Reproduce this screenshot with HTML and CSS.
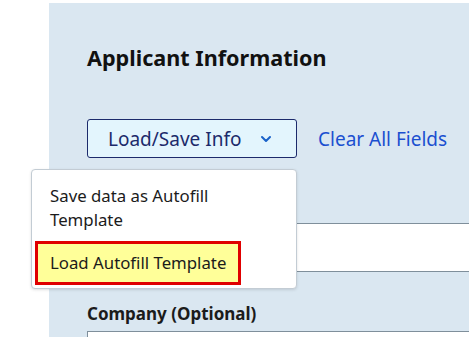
FILE: index.html
```html
<!DOCTYPE html>
<html lang="en">
<head>
    <meta charset="UTF-8">
    <meta name="viewport" content="width=device-width, initial-scale=1.0">
    <title>Applicant Information</title>
    <link rel="stylesheet" href="styles.css">
</head>
<body>
    <main class="page">
        <section class="panel">
            <h2 class="panel-title">Applicant Information</h2>

            <div class="actions">
                <div class="dropdown">
                    <button class="dropdown-toggle">
                        <span>Load/Save Info</span>
                        <svg class="chevron" width="12" height="8" viewBox="0 0 12 8" fill="none" stroke="currentColor">
                            <path stroke-width="2" stroke-linecap="round" stroke-linejoin="round" d="M2 2l4 4 4-4"/>
                        </svg>
                    </button>
                    <!-- menu open -->
                    <ul class="dropdown-menu">
                        <li class="menu-item">Save data as Autofill<br>Template</li>
                        <li class="menu-item highlighted">Load Autofill Template</li>
                    </ul>
                </div>
                <a href="#" class="clear-link">Clear All Fields</a>
            </div>

            <!-- label of this field sits under the open menu -->
            <div class="field first">
                <input class="field-input" type="text" aria-label="Full Name">
            </div>

            <div class="field">
                <label class="field-label" for="company">Company (Optional)</label>
                <input class="field-input" id="company" type="text">
            </div>
        </section>
    </main>
</body>
</html>
```

FILE: styles.css
```css
* {
    margin: 0;
    padding: 0;
    box-sizing: border-box;
}

body {
    font-family: 'Noto Sans', 'Open Sans', sans-serif;
    color: #1b1b1b;
    background-color: white;
    overflow: hidden;
}

.page {
    padding: 3px 0 0 49px;
}

.panel {
    width: 640px;
    min-height: 400px;
    background-color: #dae7f1;
    padding: 40px 0 0 38px;
}

.panel-title {
    font-size: 21.6px;
    font-weight: 700;
    line-height: 30px;
    color: #111;
}

.actions {
    display: flex;
    align-items: center;
    gap: 21px;
    margin-top: 46px;
}

.dropdown {
    position: relative;
}

.dropdown-toggle {
    display: flex;
    align-items: center;
    justify-content: space-between;
    width: 210px;
    height: 39px;
    padding: 0 24px 0 20px;
    font-family: inherit;
    font-size: 19px;
    line-height: 24px;
    white-space: nowrap;
    color: #1c2a6b;
    background-color: #e3f5fd;
    border: 1px solid #1c2a6b;
    border-radius: 3px;
    cursor: pointer;
}

.chevron {
    color: #1a62c9;
}

.dropdown-menu {
    position: absolute;
    top: 50px;
    left: -56px;
    width: 266px;
    list-style: none;
    padding: 3px;
    background: white;
    border: 1px solid #c3ccd4;
    border-radius: 4px;
    box-shadow: 0 1px 3px rgba(0, 0, 0, 0.12);
    z-index: 10;
}

.menu-item {
    font-size: 16.8px;
    line-height: 24px;
    padding: 11px 15px 9px;
    cursor: pointer;
}

.menu-item.highlighted {
    width: fit-content;
    padding: 7px 12px;
    background-color: #ffff99;
    border: 3px solid #e00000;
}

.clear-link {
    font-size: 19px;
    line-height: 24px;
    color: #1a4fd0;
    text-decoration: none;
}

.field {
    margin-top: 30px;
}

.field.first {
    margin-top: 65px;
}

.field-label {
    display: block;
    font-size: 17px;
    font-weight: 700;
    line-height: 24px;
    margin-bottom: 5px;
}

.field-input {
    display: block;
    width: 100%;
    height: 49px;
    background: white;
    border: 1px solid #7f8f9b;
    border-right: none;
}
```
